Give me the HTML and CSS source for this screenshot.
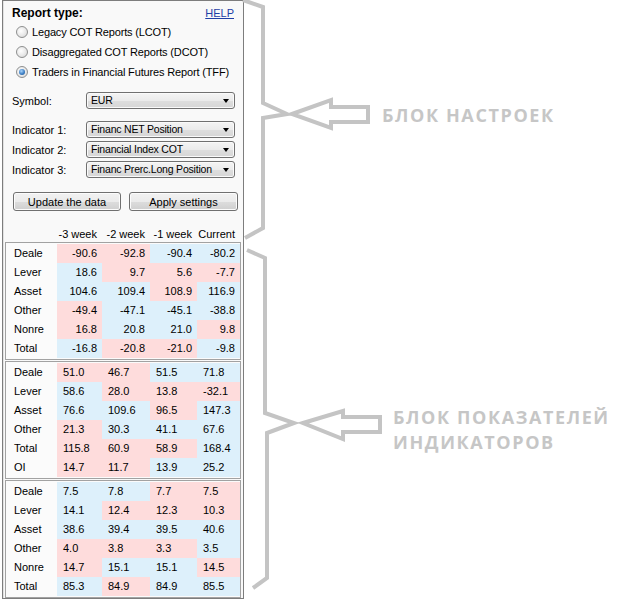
FILE: index.html
```html
<!DOCTYPE html>
<html lang="en">
<head>
    <meta charset="UTF-8">
    <title>COT Reports</title>
    <link rel="stylesheet" href="styles.css">
</head>
<body>
<div class="page">
    <div class="panel">
        <div class="settings">
            <div class="title-row">
                <span class="title">Report type:</span>
                <a class="help" href="#">HELP</a>
            </div>
            <div class="radio-row"><span class="radio"></span>Legacy COT Reports (LCOT)</div>
            <div class="radio-row"><span class="radio"></span>Disaggregated COT Reports (DCOT)</div>
            <div class="radio-row"><span class="radio checked"></span>Traders in Financial Futures Report (TFF)</div>

            <div class="field symbol">
                <span class="field-label">Symbol:</span>
                <div class="combo">EUR</div>
            </div>

            <div class="indicators">
                <div class="field">
                    <span class="field-label">Indicator 1:</span>
                    <div class="combo">Financ NET Position</div>
                </div>
                <div class="field">
                    <span class="field-label">Indicator 2:</span>
                    <div class="combo">Financial Index COT</div>
                </div>
                <div class="field">
                    <span class="field-label">Indicator 3:</span>
                    <div class="combo">Financ Prerc.Long Position</div>
                </div>
            </div>

            <div class="actions">
                <button class="btn update">Update the data</button>
                <button class="btn apply">Apply settings</button>
            </div>
        </div>

        <div class="row head">
            <span></span><span>-3 week</span><span>-2 week</span><span>-1 week</span><span>Current</span>
        </div>

        <div class="section align-right">
            <div class="row"><span>Deale</span><span class="p">-90.6</span><span class="p">-92.8</span><span class="b">-90.4</span><span class="b">-80.2</span></div>
            <div class="row"><span>Lever</span><span class="b">18.6</span><span class="p">9.7</span><span class="p">5.6</span><span class="p">-7.7</span></div>
            <div class="row"><span>Asset</span><span class="b">104.6</span><span class="b">109.4</span><span class="p">108.9</span><span class="b">116.9</span></div>
            <div class="row"><span>Other</span><span class="p">-49.4</span><span class="b">-47.1</span><span class="b">-45.1</span><span class="b">-38.8</span></div>
            <div class="row"><span>Nonre</span><span class="p">16.8</span><span class="b">20.8</span><span class="b">21.0</span><span class="p">9.8</span></div>
            <div class="row"><span>Total</span><span class="b">-16.8</span><span class="p">-20.8</span><span class="p">-21.0</span><span class="b">-9.8</span></div>
        </div>

        <div class="section">
            <div class="row"><span>Deale</span><span class="p">51.0</span><span class="p">46.7</span><span class="b">51.5</span><span class="b">71.8</span></div>
            <div class="row"><span>Lever</span><span class="b">58.6</span><span class="p">28.0</span><span class="p">13.8</span><span class="p">-32.1</span></div>
            <div class="row"><span>Asset</span><span class="b">76.6</span><span class="b">109.6</span><span class="p">96.5</span><span class="b">147.3</span></div>
            <div class="row"><span>Other</span><span class="p">21.3</span><span class="b">30.3</span><span class="b">41.1</span><span class="b">67.6</span></div>
            <div class="row"><span>Total</span><span class="p">115.8</span><span class="p">60.9</span><span class="p">58.9</span><span class="b">168.4</span></div>
            <div class="row"><span>OI</span><span class="p">14.7</span><span class="p">11.7</span><span class="b">13.9</span><span class="b">25.2</span></div>
        </div>

        <div class="section">
            <div class="row"><span>Deale</span><span class="b">7.5</span><span class="b">7.8</span><span class="p">7.7</span><span class="p">7.5</span></div>
            <div class="row"><span>Lever</span><span class="b">14.1</span><span class="p">12.4</span><span class="p">12.3</span><span class="p">10.3</span></div>
            <div class="row"><span>Asset</span><span class="b">38.6</span><span class="b">39.4</span><span class="b">39.5</span><span class="b">40.6</span></div>
            <div class="row"><span>Other</span><span class="p">4.0</span><span class="p">3.8</span><span class="p">3.3</span><span class="b">3.5</span></div>
            <div class="row"><span>Nonre</span><span class="p">14.7</span><span class="b">15.1</span><span class="b">15.1</span><span class="p">14.5</span></div>
            <div class="row"><span>Total</span><span class="b">85.3</span><span class="p">84.9</span><span class="b">84.9</span><span class="b">85.5</span></div>
        </div>
    </div>

    <div class="notes">
        <!-- brackets and arrows, drawn in page coordinates -->
        <svg class="marks" width="390" height="600" viewBox="244 0 390 600">
            <polyline points="243,0 263,7 263,103 287,114 263,118 263,228 245,238"/>
            <polygon points="292,114 331,100 331,107 368,107 368,122 331,122 331,128"/>
            <polyline points="247,250 265,258 265,413 294,423 267,433 267,578 253,588"/>
            <polygon points="303,423 343,411 343,417 380,417 380,432 343,432 343,439"/>
        </svg>
        <div class="note note-settings">БЛОК НАСТРОЕК</div>
        <div class="note note-indicators">БЛОК ПОКАЗАТЕЛЕЙ<br>ИНДИКАТОРОВ</div>
    </div>
</div>
</body>
</html>
```

FILE: styles.css
```css
body {
    margin: 0;
    background: #fff;
    font-family: "Liberation Sans", Arial, sans-serif;
    font-size: 11px;
    color: #000;
}

.page {
    display: flex;
    height: 600px;
    overflow: hidden;
}

.panel {
    width: 242px;
    margin-left: 2px;
    align-self: flex-start;
    border: 1px solid #7d7d7d;
    box-shadow: inset 1px 0 0 #e2e2e2;
    background: #f9f9f9;
    box-sizing: border-box;
}

.settings {
    padding: 4px 5px 0 9px;
}

.title-row {
    display: flex;
    justify-content: space-between;
    height: 17px;
    line-height: 17px;
}

.title {
    font-weight: bold;
    font-size: 12px;
}

.help {
    color: #1f3fa6;
    text-decoration: underline;
    margin-right: 4px;
}

.radio-row {
    display: flex;
    align-items: center;
    height: 20px;
    padding-left: 4px;
    white-space: nowrap;
    letter-spacing: -0.15px;
}

.radio {
    width: 12px;
    height: 12px;
    margin-right: 4px;
    border: 1px solid #8e8f8f;
    border-radius: 50%;
    box-sizing: border-box;
    background: radial-gradient(circle at 40% 40%, #ffffff 0%, #e8e8e8 55%, #cfcfcf 100%);
    position: relative;
    flex-shrink: 0;
}

.radio.checked::after {
    content: "";
    position: absolute;
    left: 2px;
    top: 2px;
    width: 6px;
    height: 6px;
    border-radius: 50%;
    background: radial-gradient(circle at 40% 35%, #a9d4fb 0%, #3d7fc4 55%, #1d4f8a 100%);
}

.field {
    display: flex;
    align-items: center;
    height: 17px;
}

.field-label {
    width: 74px;
    flex-shrink: 0;
}

.combo {
    width: 149px;
    height: 17px;
    line-height: 15px;
    padding-left: 4px;
    font-size: 10.5px;
    letter-spacing: -0.2px;
    border: 1px solid #707070;
    border-radius: 3px;
    box-sizing: border-box;
    background: linear-gradient(#f4f4f4, #ebebeb 50%, #dedede 51%, #d6d6d6);
    box-shadow: inset 0 0 0 1px #fafafa;
    position: relative;
    white-space: nowrap;
}

.combo::after {
    content: "";
    position: absolute;
    right: 5px;
    top: 6px;
    border-left: 3.5px solid transparent;
    border-right: 3.5px solid transparent;
    border-top: 4px solid #000;
}

.symbol {
    margin-top: 10px;
}

.indicators {
    margin-top: 12px;
    display: flex;
    flex-direction: column;
    gap: 3px;
}

.actions {
    display: flex;
    gap: 8px;
    margin-top: 14px;
    padding-left: 1px;
}

.btn {
    height: 19px;
    padding: 0;
    font-family: inherit;
    font-size: 11px;
    color: #000;
    border: 1px solid #707070;
    border-radius: 3px;
    background: linear-gradient(#f2f2f2, #ebebeb 50%, #dddddd 51%, #cfcfcf);
    box-shadow: inset 0 0 0 1px #fcfcfc;
}

.update {
    width: 108px;
}

.apply {
    width: 109px;
}

.row {
    display: grid;
    grid-template-columns: 51px 45px 48px 47px 43px;
    height: 19px;
    line-height: 19px;
}

.row span {
    padding-left: 6px;
}

.row span:first-child {
    padding-left: 8px;
}

.head {
    margin: 16px 3px 0;
    height: 15px;
    line-height: 15px;
    text-align: right;
}

.head span,
.align-right .row span {
    padding-left: 0;
    padding-right: 5px;
}

.align-right .row span {
    text-align: right;
}

.align-right .row span:first-child {
    text-align: left;
    padding-left: 8px;
}

.section {
    margin: 0 2px;
    padding: 1px 0;
    border: 1px solid #a2a2a2;
    background: #fbfbfb;
}

.section + .section {
    margin-top: 1px;
}

.p {
    background: #fedcdc;
}

.b {
    background: #ddf0fb;
}

.notes {
    flex: 1;
    position: relative;
}

.marks {
    position: absolute;
    left: 0;
    top: 0;
    overflow: visible;
    fill: none;
    stroke: #c4c4c4;
    stroke-width: 4;
}

.note {
    position: absolute;
    font-family: "Open Sans", sans-serif;
    font-weight: 700;
    font-size: 18px;
    line-height: 25px;
    letter-spacing: 1.6px;
    color: #c6c6c6;
    white-space: nowrap;
}

.note-settings {
    left: 138px;
    top: 103px;
}

.note-indicators {
    left: 149px;
    top: 405px;
}
```
